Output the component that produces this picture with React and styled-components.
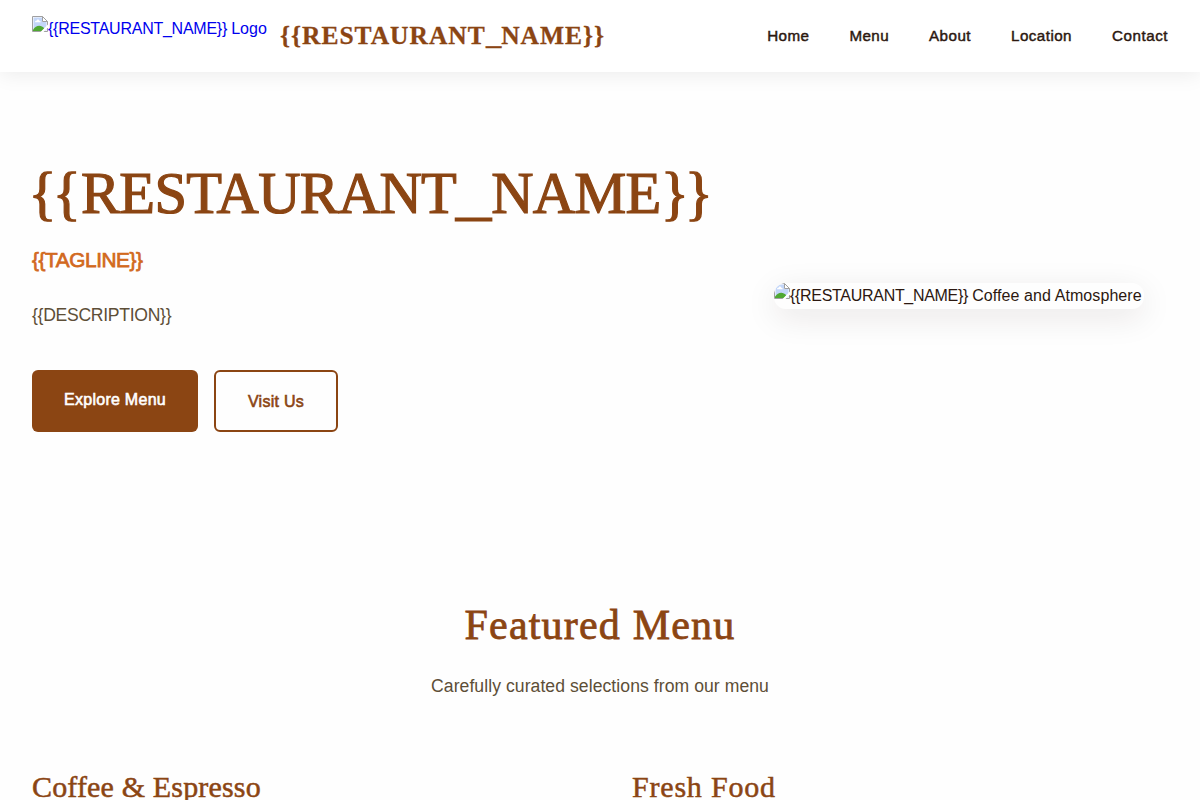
import React from "react";
import styled, { createGlobalStyle } from "styled-components";

const Global = createGlobalStyle`
  * { box-sizing: border-box; margin: 0; padding: 0; }
  html, body { height: 800px; overflow: hidden; }
  body {
    font-family: "Liberation Sans", Arial, sans-serif;
    font-size: 16px;
    line-height: 1.6;
    color: #2c1810;
    background: #fefefe;
  }
`;

const Header = styled.header`
  position: relative;
  height: 72px;
  padding: 0 32px;
  display: flex;
  justify-content: space-between;
  background: #fff;
  box-shadow: 0 2px 20px rgba(0, 0, 0, 0.08);
`;

const Brand = styled.div`
  display: flex;
  align-items: center;
  gap: 12px;
`;

const BrandLink = styled.a`
  display: flex;
  align-items: flex-start;
  width: 236px;
  height: 40px;
  color: #0000ee;
  text-decoration: none;
`;

const AltText = styled.span`
  white-space: pre;
  line-height: 26px;
  letter-spacing: ${(p) => p.$spacing}px;
`;

const BrandName = styled.span`
  font-family: "Liberation Serif", serif;
  font-size: 25.5px;
  font-weight: 700;
  line-height: 38px;
  letter-spacing: 0.98px;
  color: #8b4513;
  -webkit-text-stroke: 0.3px currentColor;
  white-space: nowrap;
`;

const Underscore = styled.span`
  display: inline-block;
  margin-right: ${(p) => p.$extra}px;
  transform: scaleX(1.2);
  transform-origin: left;
`;

const Nav = styled.nav`
  display: flex;
  align-items: center;
  gap: 40px;
`;

const NavLink = styled.a`
  font-size: 15.2px;
  letter-spacing: ${(p) => p.$spacing}px;
  -webkit-text-stroke: 0.45px currentColor;
  color: #2c1810;
`;

const Hero = styled.section`
  height: 448px;
  padding: 0 32px;
  display: flex;
  justify-content: space-between;
  align-items: center;
`;

const HeroCopy = styled.div`
  display: flex;
  flex-direction: column;
  align-items: flex-start;
`;

const Title = styled.h1`
  margin-left: -3.5px;
  font-family: "Liberation Serif", serif;
  font-size: 58.5px;
  font-weight: 400;
  line-height: 67px;
  letter-spacing: -0.7px;
  color: #8b4513;
  -webkit-text-stroke: 1.2px currentColor;
  white-space: nowrap;
`;

const Braces = styled.span`
  letter-spacing: -3.9px;
  margin-right: 4.2px;
`;

const Tagline = styled.p`
  margin-top: 16px;
  font-size: 20.8px;
  line-height: 33px;
  letter-spacing: -0.42px;
  color: #d2691e;
  -webkit-text-stroke: 0.75px currentColor;
`;

const Description = styled.p`
  margin-top: 24px;
  font-size: 17.6px;
  line-height: 30px;
  letter-spacing: -0.3px;
  color: #5d4e37;
`;

const Actions = styled.div`
  margin-top: 40px;
  display: flex;
  gap: 16px;
`;

const Button = styled.a`
  width: ${(p) => (p.$outline ? 124 : 166)}px;
  height: 62px;
  padding-top: 17px;
  border: ${(p) => (p.$outline ? "2px solid #8b4513" : "0")};
  border-radius: 6px;
  background: ${(p) => (p.$outline ? "transparent" : "#8b4513")};
  color: ${(p) => (p.$outline ? "#8b4513" : "#fff")};
  -webkit-text-stroke: 0.6px currentColor;
  letter-spacing: 0.27px;
  line-height: 26px;
  text-align: center;
`;

const HeroImage = styled.div`
  display: flex;
  align-items: flex-start;
  width: 370px;
  height: 26px;
  margin-right: 24px;
  border-radius: 12px;
  overflow: hidden;
  box-shadow: 0 8px 32px rgba(44, 24, 16, 0.1);
`;

const MissingIcon = styled.svg`
  display: block;
  flex: none;
  width: 16px;
  height: 16px;
`;

const Featured = styled.section`
  padding: 81px 32px 0;
  text-align: center;
`;

const SectionTitle = styled.h2`
  font-family: "Liberation Serif", serif;
  font-size: 42px;
  font-weight: 400;
  line-height: 48px;
  letter-spacing: 1.2px;
  color: #8b4513;
  -webkit-text-stroke: 0.8px currentColor;
`;

const SectionLead = styled.p`
  margin-top: 23px;
  font-size: 17.6px;
  line-height: 28px;
  color: #5d4e37;
  letter-spacing: 0.06px;
`;

const MenuGrid = styled.div`
  margin-top: 67px;
  display: grid;
  grid-template-columns: 1fr 1fr;
  gap: 64px;
  text-align: left;
`;

const MenuTitle = styled.h3`
  font-family: "Liberation Serif", serif;
  font-size: 30px;
  font-weight: 400;
  line-height: 40px;
  letter-spacing: ${(p) => p.$spacing}px;
  color: #8b4513;
  -webkit-text-stroke: 0.5px currentColor;
`;

const MissingImage = () => (
  <MissingIcon viewBox="0 0 16 16">
    <path d="M.5 .5H10.5L15.5 5.5V15.5H.5Z" fill="#fff" stroke="#a0a0a0" />
    <path d="M1.5 1.5H10V6H14.5V14.5H1.5Z" fill="#c3d6f8" />
    <path d="M3 6.2C3 5 4 4.7 4.6 4.8C4.8 3.2 7 3.2 7.3 4.8C8.3 4.7 8.8 5.5 8.7 6.2Z" fill="#fff" />
    <path d="M1 15V13.8C4 9 9 8.4 12.5 12.5L10 15Z" fill="#4fa832" />
    <path d="M10.5 .5V5.5H15.5Z" fill="#fff" stroke="#a0a0a0" />
    <path d="M16 8.5L8.5 16H11.5L16 11.5Z" fill="#fff" />
  </MissingIcon>
);

const links = [
  ["Home", 0.42],
  ["Menu", 0.4],
  ["About", 0.45],
  ["Location", 0.45],
  ["Contact", 0.52],
];

export default function App() {
  return (
    <>
      <Global />
      <Header>
        <Brand>
          <BrandLink>
            <MissingImage />
            <AltText $spacing={-0.25}>{"{{RESTAURANT_NAME}} "}</AltText>
            <AltText $spacing={0}>Logo</AltText>
          </BrandLink>
          <BrandName>
            {"{{RESTAURANT"}
            <Underscore $extra={1.8}>_</Underscore>
            {"NAME}}"}
          </BrandName>
        </Brand>
        <Nav>
          {links.map(([label, spacing]) => (
            <NavLink key={label} $spacing={spacing}>{label}</NavLink>
          ))}
        </Nav>
      </Header>
      <Hero>
        <HeroCopy>
          <Title>
            <Braces>{"{{"}</Braces>
            RESTAURANT
            <Underscore $extra={6.5}>_</Underscore>
            NAME
            <Braces>{"}}"}</Braces>
          </Title>
          <Tagline>{"{{TAGLINE}}"}</Tagline>
          <Description>{"{{DESCRIPTION}}"}</Description>
          <Actions>
            <Button>Explore Menu</Button>
            <Button $outline>Visit Us</Button>
          </Actions>
        </HeroCopy>
        <HeroImage>
          <MissingImage />
          <AltText $spacing={-0.3}>{"{{RESTAURANT_NAME}} "}</AltText>
          <AltText $spacing={0.08}>Coffee and Atmosphere</AltText>
        </HeroImage>
      </Hero>
      <Featured>
        <SectionTitle>Featured Menu</SectionTitle>
        <SectionLead>Carefully curated selections from our menu</SectionLead>
        <MenuGrid>
          <MenuTitle $spacing={0.16}>Coffee &amp; Espresso</MenuTitle>
          <MenuTitle $spacing={0.8}>Fresh Food</MenuTitle>
        </MenuGrid>
      </Featured>
    </>
  );
}
